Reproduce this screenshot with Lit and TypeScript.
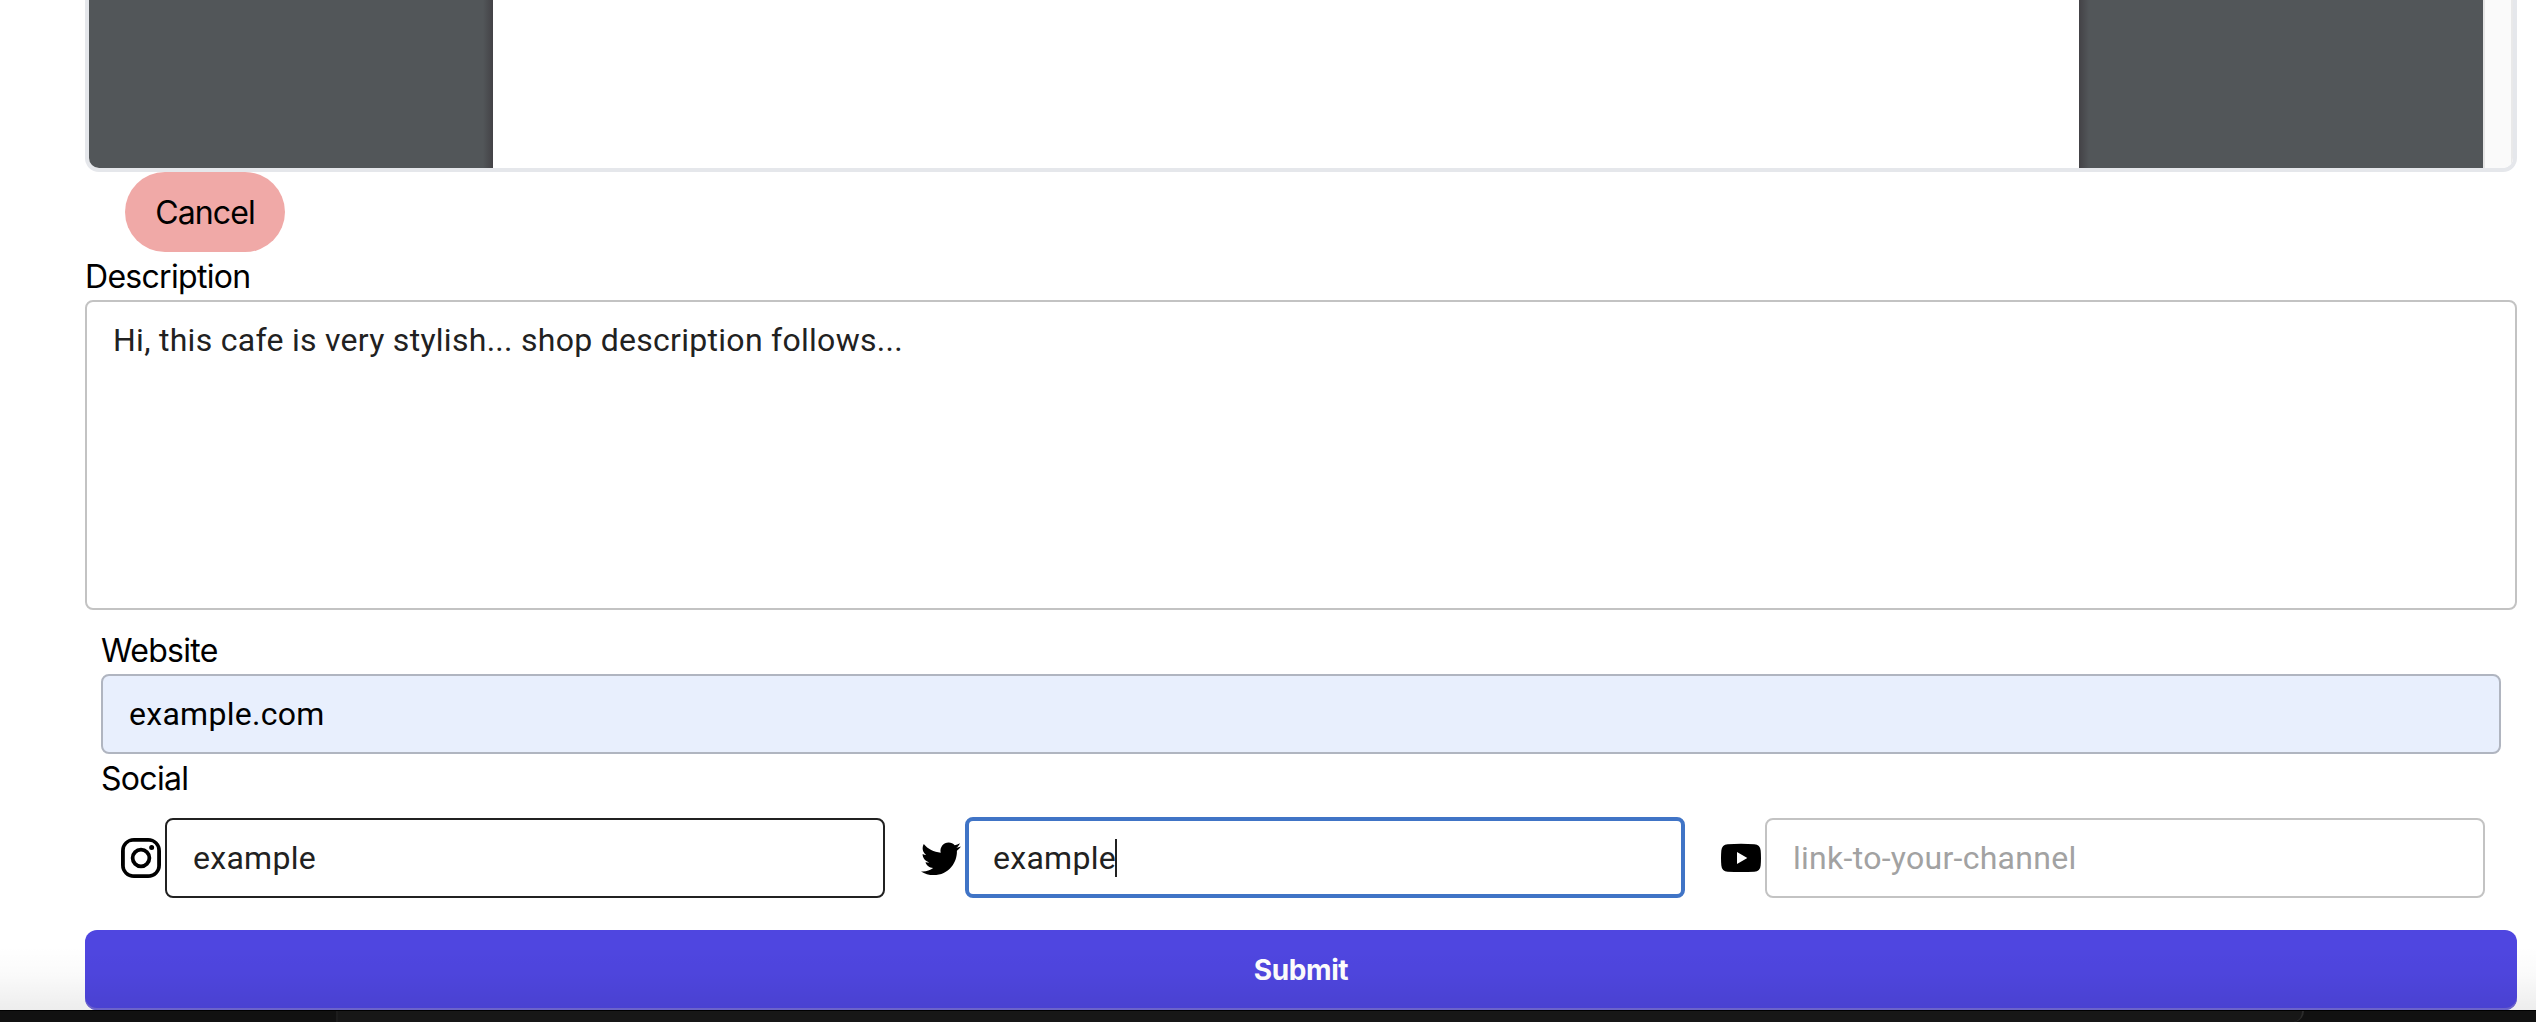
import { LitElement, html, css, svg } from "lit";
import { customElement, property } from "lit/decorators.js";
import { classMap } from "lit/directives/class-map.js";

const icons = {
  instagram: svg`<path d="M7.75 0h8.5A7.75 7.75 0 0 1 24 7.75v8.5A7.75 7.75 0 0 1 16.25 24h-8.5A7.75 7.75 0 0 1 0 16.25v-8.5A7.75 7.75 0 0 1 7.75 0zM7.1 2.3A4.8 4.8 0 0 0 2.3 7.1v9.8a4.8 4.8 0 0 0 4.8 4.8h9.8a4.8 4.8 0 0 0 4.8-4.8V7.1a4.8 4.8 0 0 0-4.8-4.8zM12 5.84a6.16 6.16 0 1 1 0 12.32 6.16 6.16 0 0 1 0-12.32zM12 8.1a3.9 3.9 0 1 0 0 7.8 3.9 3.9 0 0 0 0-7.8zM18.4 4.2a1.5 1.5 0 1 1 0 3 1.5 1.5 0 0 1 0-3z" fill-rule="evenodd"/>`,
  twitter: svg`<path transform="translate(0 .5)" d="M24 4.557c-.883.392-1.832.656-2.828.775 1.017-.609 1.798-1.574 2.165-2.724-.951.564-2.005.974-3.127 1.195-.897-.957-2.178-1.555-3.594-1.555-3.179 0-5.515 2.966-4.797 6.045-4.091-.205-7.719-2.165-10.148-5.144-1.29 2.213-.669 5.108 1.523 6.574-.806-.026-1.566-.247-2.229-.616-.054 2.281 1.581 4.415 3.949 4.89-.693.188-1.452.232-2.224.084.626 1.956 2.444 3.379 4.6 3.419-2.07 1.623-4.678 2.348-7.29 2.04 2.179 1.397 4.768 2.212 7.548 2.212 9.142 0 14.307-7.721 13.995-14.646.962-.695 1.797-1.562 2.457-2.549z"/>`,
  youtube: svg`<path d="M4 3.7Q12 3.2 20 3.7Q23.5 3.8 23.8 7.5Q24.2 12 23.8 16.5Q23.5 20.1 20 20.2Q12 20.6 4 20.2Q.5 20.1 .2 16.5Q-.2 12 .2 7.5Q.5 3.8 4 3.7zM9.6 8.4v7.2l6.2-3.6z" fill-rule="evenodd"/>`,
};

@customElement("text-field")
class TextField extends LitElement {
  @property() value = "";
  @property() placeholder = "";
  @property() variant = "plain";

  static styles = css`
    :host { display: block; flex: 1; min-width: 0; }
    .field {
      display: flex; align-items: center; box-sizing: border-box; height: 80px;
      padding: 0 26px; border: 2px solid #c3c3c3; border-radius: 8px;
      font: 400 32px/46px Roboto, sans-serif; letter-spacing: 0.28px; color: #212121;
      background: #fff;
    }
    .area { height: 310px; align-items: flex-start; padding-top: 15px; }
    .autofill { background: #e8effd; border-color: #b0b5c0; color: #000; }
    .hover { border-color: #212121; }
    .focus { height: 81px; margin-top: -1px; border: 4px solid #4074c6; padding: 1px 24px 0; }
    .hint { color: #a2a2a2; }
    .caret { width: 2px; height: 38px; background: #212121; margin-left: -1px; }
  `;

  render() {
    return html`<div class=${classMap({ field: true, [this.variant]: true })}>
      ${this.value
        ? html`<span>${this.value}</span>`
        : html`<span class="hint">${this.placeholder}</span>`}
      ${this.variant === "focus" ? html`<span class="caret"></span>` : ""}
    </div>`;
  }
}

@customElement("app-root")
class AppRoot extends LitElement {
  static styles = css`
    :host {
      display: flex; flex-direction: column; height: 1022px; overflow: hidden;
      background: #fff; color: #000; font-family: Inter, sans-serif;
    }
    .form {
      display: flex; flex-direction: column; height: 1010px; box-sizing: border-box;
      padding: 0 19px 0 85px; position: relative;
    }
    .viewer {
      display: flex; box-sizing: border-box; height: 172px; overflow: hidden;
      border: 4px solid #e5e7eb; border-top: 0; border-radius: 0 0 14px 14px;
    }
    .gutter { width: 404px; background: linear-gradient(to left, #434246, #525659 10px); }
    .gutter.right { background: linear-gradient(to right, #434246, #525659 10px); }
    .page { flex: 1; background: #fff; }
    .scroll {
      width: 30px; box-sizing: border-box; background: #fafafa;
      border-left: 2px solid #e6e6e6; border-right: 2px solid #e9e9e9;
    }
    .cancel {
      align-self: flex-start; margin-left: 40px; width: 160px; height: 80px; padding: 2px 0 0;
      border: 0; border-radius: 40px; background: #f0a9a7; color: #000;
      font: 400 32px/78px Inter, sans-serif; letter-spacing: -0.9px; text-align: center;
    }
    .label { font-size: 32px; line-height: 46px; height: 48px; padding-top: 2px; box-sizing: border-box; letter-spacing: -0.7px; }
    .details { padding: 16px 16px 0; }
    .social { display: flex; gap: 32px; padding: 16px 16px 0 16px; }
    .account { display: flex; flex: 1; gap: 4px; padding-left: 4px; height: 80px; }
    .icon { width: 40px; height: 40px; margin-top: 20px; flex: none; }
    .submit {
      margin-top: 32px; height: 80px; border: 0; border-radius: 12px; padding: 0;
      background: #4f46e0; color: #fff; font: 700 28px/80px Inter, sans-serif;
      letter-spacing: -0.4px; flex: none; box-shadow: inset 0 -2px #746bd8;
    }
    .shade {
      position: absolute; left: 0; right: 0; bottom: 0; height: 64px;
      background: linear-gradient(to bottom, rgba(0,0,0,0), rgba(0,0,0,.018) 45%, rgba(0,0,0,.07));
    }
    .dock {
      box-sizing: border-box; height: 12px; padding-left: 336px; display: flex;
      background: #111; border-top: 1px solid #000;
    }
    .tab {
      width: 1968px; box-sizing: border-box; background: #171717;
      border-left: 2px solid #1c1c1c; border-right: 2px solid #2b2b2b;
      border-radius: 0 0 14px 0;
    }
  `;

  private accounts = [
    { icon: icons.instagram, value: "example", hint: "", variant: "hover" },
    { icon: icons.twitter, value: "example", hint: "", variant: "focus" },
    { icon: icons.youtube, value: "", hint: "link-to-your-channel", variant: "plain" },
  ];

  render() {
    return html`
      <div class="form">
        <div class="viewer">
          <div class="gutter"></div>
          <div class="page"></div>
          <div class="gutter right"></div>
          <div class="scroll"></div>
        </div>
        <button class="cancel">Cancel</button>
        <div class="label">Description</div>
        <text-field style="flex:none" variant="area" value="Hi, this cafe is very stylish... shop description follows..."></text-field>
        <div class="details">
          <div class="label">Website</div>
          <text-field variant="autofill" value="example.com"></text-field>
          <div class="label">Social</div>
          <div class="social">
            ${this.accounts.map(
              (a) => html`<div class="account">
                <svg class="icon" viewBox="0 0 24 24">${a.icon}</svg>
                <text-field .value=${a.value} .placeholder=${a.hint} variant=${a.variant}></text-field>
              </div>`
            )}
          </div>
        </div>
        <button class="submit">Submit</button>
        <div class="shade"></div>
      </div>
      <div class="dock"><div class="tab"></div></div>
    `;
  }
}
